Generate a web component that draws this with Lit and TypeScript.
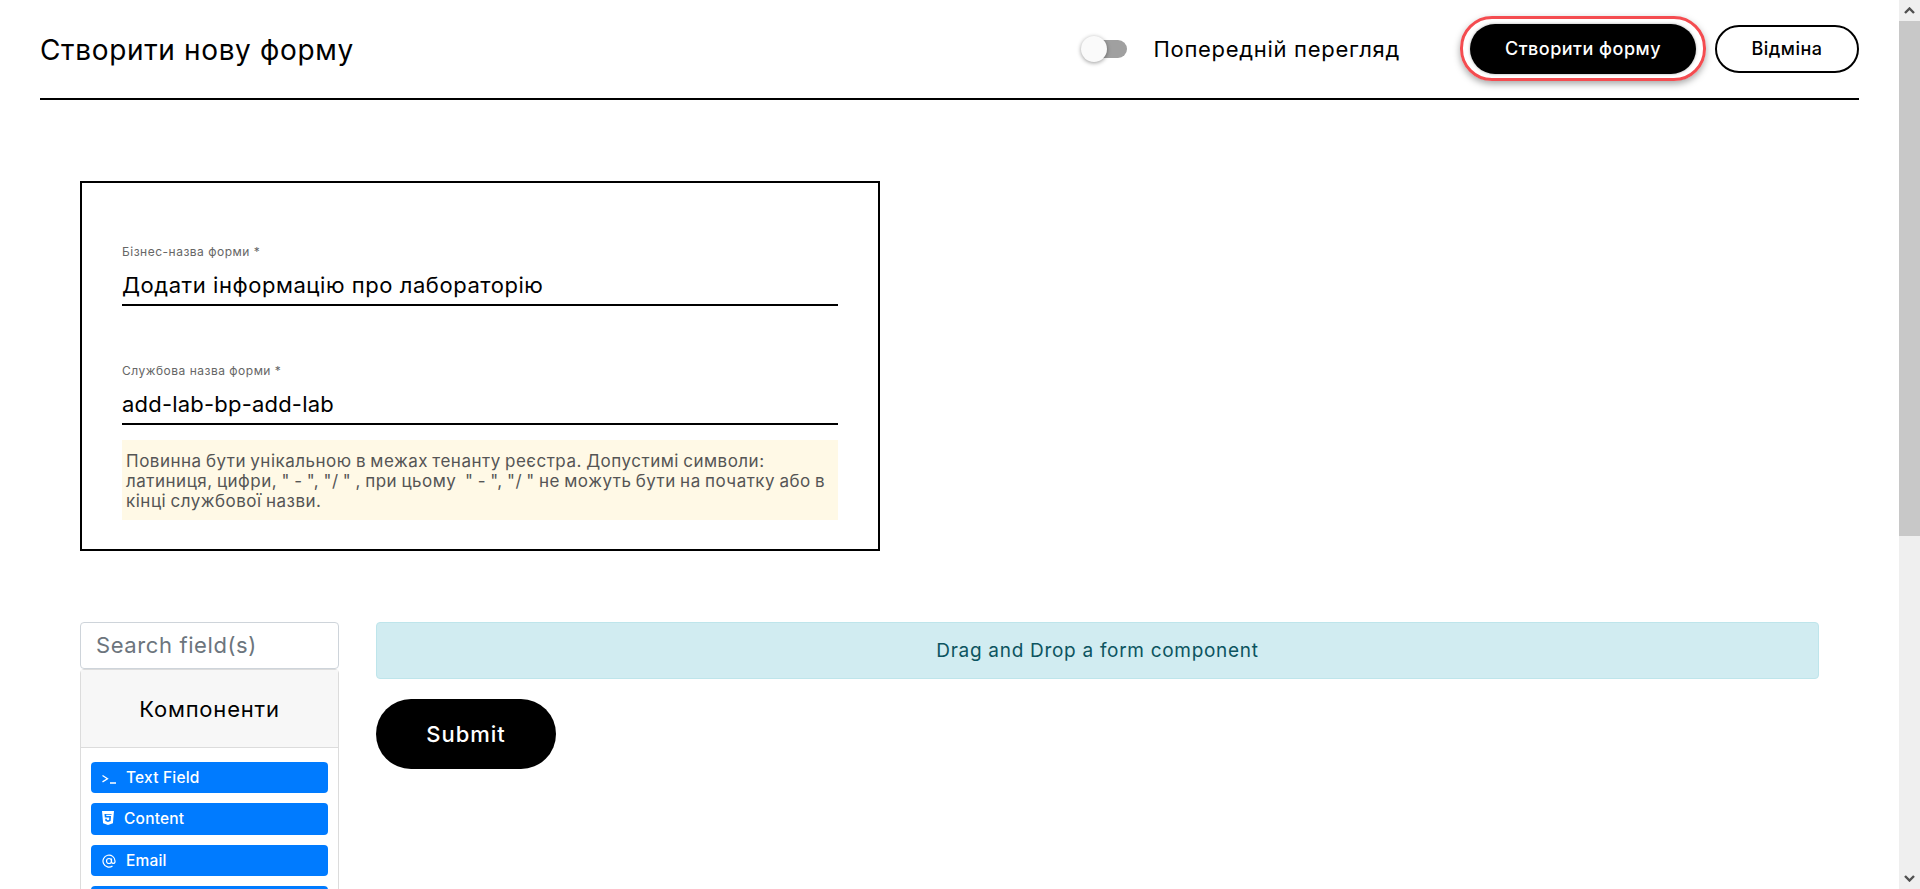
import { LitElement, html, css } from "lit";
import { customElement } from "lit/decorators.js";

@customElement("app-root")
export class AppRoot extends LitElement {
  static styles = css`
    :host { display: flex; height: 100vh; overflow: hidden; background: #fff; font-family: Inter, "Noto Sans", sans-serif; color: #000; }
    * { box-sizing: border-box; }
    .page { flex: 1; min-width: 0; padding: 0 40px; }
    .top { height: 100px; border-bottom: 2px solid #000; display: flex; align-items: center; padding-bottom: 1px; }
    .top h1 { margin: 0; padding-top: 2px; font-size: 28px; line-height: 34px; font-weight: 400; letter-spacing: .65px; flex: 1; }
    .switch { position: relative; width: 40px; height: 18px; margin-right: 26px; background: #a0a0a0; border-radius: 9px; }
    .switch::before { content: ""; position: absolute; left: -6px; top: -4px; width: 26px; height: 26px; border-radius: 50%; background: #fafafa; box-shadow: 0 1px 4px rgba(0,0,0,.4); }
    .preview { font-size: 22px; letter-spacing: .7px; margin-right: 60px; }
    .create-wrap { border: 3px solid #f44c50; border-radius: 32px; padding: 4.5px 7px; box-shadow: 0 3px 7px rgba(0,0,0,.35); margin-right: 9px; display: flex; }
    .btn { border-radius: 25px; font-size: 18px; letter-spacing: .5px; display: flex; align-items: center; justify-content: center; font-weight: 500; }
    .btn.dark { width: 226px; height: 50px; background: #000; color: #fff; box-shadow: 0 0 3px rgba(0,0,0,.35); }
    .btn.light { width: 144px; height: 48px; border: 2px solid #000; background: #fff; }
    .card { width: 800px; height: 370px; margin: 81px 0 0 40px; border: 2px solid #000; padding: 61px 40px 0; }
    .label { font-size: 12px; line-height: 16px; letter-spacing: .5px; color: #666; }
    .value { font-size: 22px; letter-spacing: .55px; line-height: 30px; margin-top: 10px; padding-bottom: 4px; border-bottom: 2px solid #000; }
    .value.latin { letter-spacing: .2px; }
    .field + .field { margin-top: 57px; }
    .hint { background: #fff9e6; color: #555; font-size: 17px; letter-spacing: .5px; word-spacing: -1px; line-height: 20px; margin-top: 15px; padding: 11px 4px; height: 80px; }
    .builder { display: flex; gap: 37px; margin: 71px 40px 0 40px; align-items: flex-start; }
    .side { width: 259px; flex: none; }
    .search { height: 47px; border: 1px solid #ced4da; border-radius: 4px; padding: 0 15px; font-size: 22px; letter-spacing: .6px; line-height: 45px; color: #6c757d; }
    .panel { border: 1px solid #dcdcdc; border-radius: 4px 4px 0 0; }
    .panel h2 { margin: 0; height: 78px; background: #f7f7f7; border-bottom: 1px solid #dcdcdc; font-size: 22px; letter-spacing: .8px; font-weight: 400; text-align: center; line-height: 78px; }
    .items { padding: 14px 10px; display: flex; flex-direction: column; gap: 10px; }
    .item { height: 31px; background: #007bff; color: #fff; border-radius: 4px; font-size: 15.5px; letter-spacing: .2px; font-weight: 500; display: flex; align-items: center; gap: 10px; padding-left: 11px; }
    .item.tall { height: 32px; padding-bottom: 2px; }
    .item svg { width: 14px; height: 14px; flex: none; }
    .item svg.narrow { width: 12px; }
    .main { flex: 1; min-width: 0; }
    .alert { height: 57px; background: #d1ecf1; border: 1px solid #bee5eb; border-radius: 4px; color: #0c5460; font-size: 19px; letter-spacing: .7px; display: flex; align-items: center; justify-content: center; }
    .submit { width: 180px; height: 70px; margin-top: 20px; border-radius: 35px; background: #000; color: #fff; font-size: 22px; letter-spacing: 1px; font-weight: 500; display: flex; align-items: center; justify-content: center; }
    .bar { width: 21px; flex: none; background: #efefef; display: flex; flex-direction: column; justify-content: space-between; position: relative; }
    .arrow { height: 21px; display: flex; align-items: center; justify-content: center; }
    .arrow svg { width: 11px; height: 7px; }
    .thumb { position: absolute; top: 21px; left: 0; right: 0; height: 515px; background: #c8c8c8; }
  `;

  render() {
    return html`
      <div class="page">
        <header class="top">
          <h1>Створити нову форму</h1>
          <span class="switch"></span>
          <span class="preview">Попередній перегляд</span>
          <div class="create-wrap"><div class="btn dark">Створити форму</div></div>
          <div class="btn light">Відміна</div>
        </header>
        <section class="card">
          <div class="field"><div class="label">Бізнес-назва форми *</div><div class="value">Додати інформацію про лабораторію</div></div>
          <div class="field"><div class="label">Службова назва форми *</div><div class="value latin">add-lab-bp-add-lab</div></div>
          <div class="hint">Повинна бути унікальною в межах тенанту реєстра. Допустимі символи:<br>латиниця, цифри, " - ", "/ " , при цьому &nbsp;" - ", "/ " не можуть бути на початку або в<br>кінці службової назви.</div>
        </section>
        <section class="builder">
          <div class="side">
            <div class="search">Search field(s)</div>
            <div class="panel">
              <h2>Компоненти</h2>
              <div class="items">
                <div class="item"><svg viewBox="0 0 14 14" fill="none" stroke="#fff" stroke-width="1.300"><path d="M.5 4.500l5 3.200-5 3.200M8 12h6"/></svg>Text Field</div>
                <div class="item tall"><svg class="narrow" viewBox="0 0 12 14" fill="#fff" fill-rule="evenodd"><path d="M0 0h12l-1.100 12.200L6 14l-4.900-1.800zM9.600 3H2.500l.3 3.500h4.500l-.2 2.400-1.100.4-1.100-.4-.1-1.200H3.200l.2 2.400L6 11l2.600-.9.4-5H4.300l-.1-1.300h5.300z"/></svg>Content</div>
                <div class="item"><svg viewBox="0 0 14 14" fill="none" stroke="#fff" stroke-width="1.200"><circle cx="7" cy="7" r="2.500"/><path d="M9.500 4.500v3.500a1.800 1.800 0 0 0 3.500 0V7a6 6 0 1 0-2.500 5"/></svg>Email</div>
                <div class="item"></div>
              </div>
            </div>
          </div>
          <div class="main">
            <div class="alert">Drag and Drop a form component</div>
            <div class="submit">Submit</div>
          </div>
        </section>
      </div>
      <div class="bar">
        <div class="arrow"><svg viewBox="0 0 11 7" fill="none" stroke="#505050" stroke-width="2.400"><path d="M1 6l4.500-4.500L10 6"/></svg></div>
        <div class="thumb"></div>
        <div class="arrow"><svg viewBox="0 0 11 7" fill="none" stroke="#505050" stroke-width="2.400"><path d="M1 1l4.500 4.500L10 1"/></svg></div>
      </div>
    `;
  }
}
